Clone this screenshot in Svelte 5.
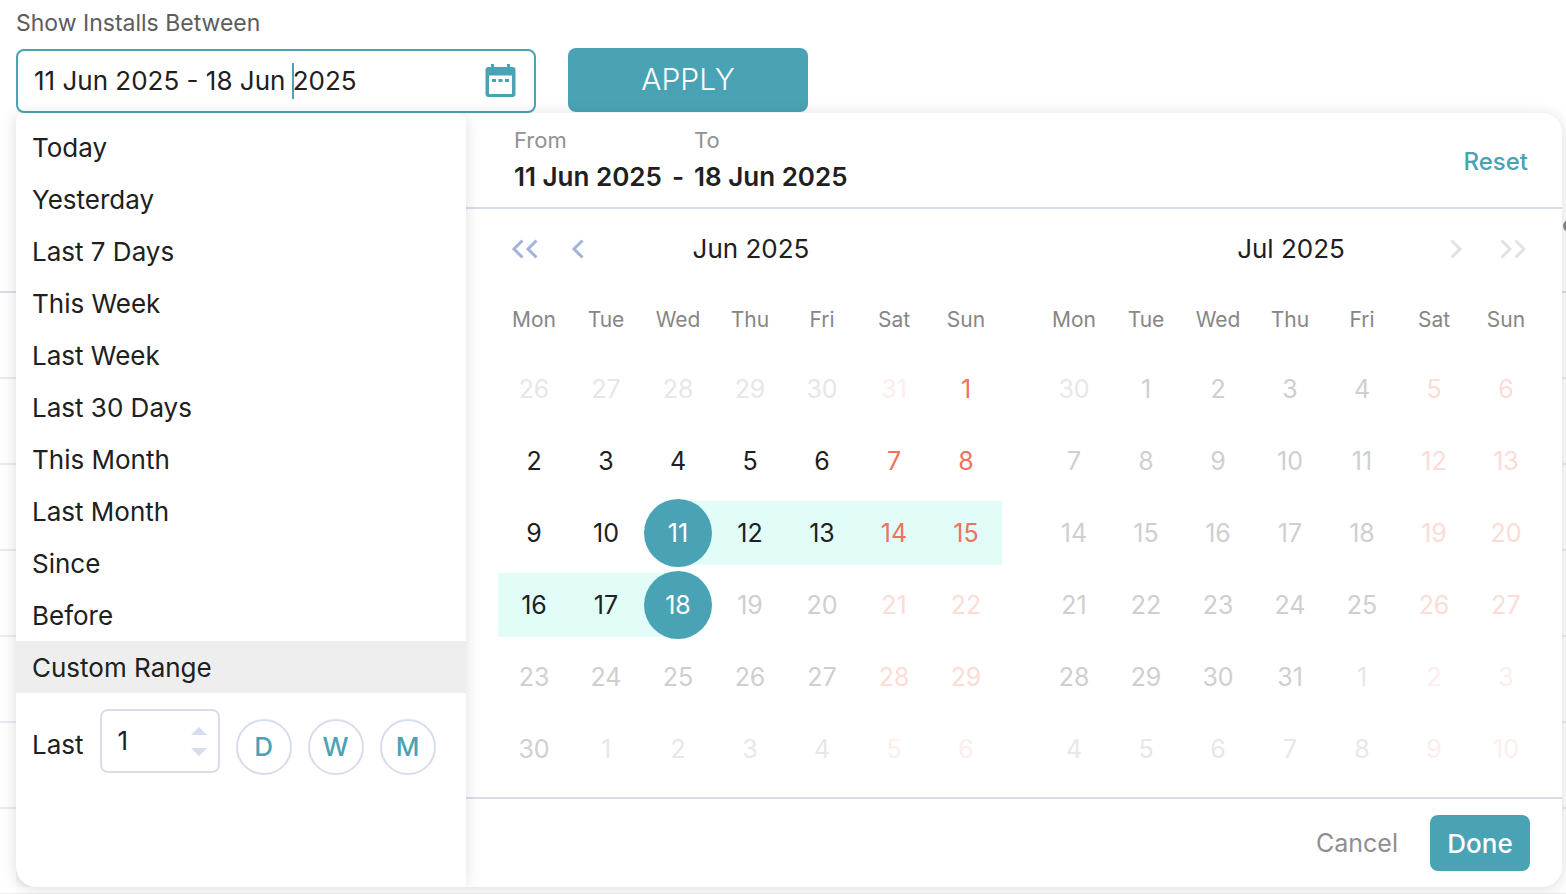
<script>
  const presets = [
    'Today', 'Yesterday', 'Last 7 Days', 'This Week', 'Last Week', 'Last 30 Days',
    'This Month', 'Last Month', 'Since', 'Before', 'Custom Range'
  ];
  const weekdays = ['Mon', 'Tue', 'Wed', 'Thu', 'Fri', 'Sat', 'Sun'];
  const units = [
    { key: 'D', label: 'Days' },
    { key: 'W', label: 'Weeks' },
    { key: 'M', label: 'Months' }
  ];
  const start = new Date(2025, 5, 11).getTime();
  const end = new Date(2025, 5, 18).getTime();

  let selected = $state('Custom Range');
  let range = $state('11 Jun 2025 - 18 Jun 2025');
  let count = $state(1);

  function buildMonth(name, month, firstDay) {
    const weeks = [];
    for (let w = 0; w < 6; w++) {
      const week = [];
      for (let d = 0; d < 7; d++) {
        const date = new Date(2025, firstDay[0], firstDay[1] + w * 7 + d);
        const time = date.getTime();
        const outside = date.getMonth() !== month;
        week.push({
          n: date.getDate(),
          outside,
          weekend: d > 4,
          disabled: outside || time > end,
          start: !outside && time === start,
          end: !outside && time === end,
          between: !outside && time > start && time < end
        });
      }
      weeks.push(week);
    }
    return { name, weeks };
  }

  const months = [
    buildMonth('Jun 2025', 5, [4, 26]),
    buildMonth('Jul 2025', 6, [5, 30])
  ];
</script>

<main>
  <form class="filter" onsubmit={(e) => e.preventDefault()}>
    <label for="range">Show Installs Between</label>
    <div class="controls">
      <div class="field">
        <input id="range" type="text" bind:value={range} />
        <span class="caret"></span>
        <svg width="31" height="34" viewBox="0 0 31 34" aria-hidden="true">
          <path fill="#4aa3b5" fill-rule="evenodd" d="M6 0h3v3h13V0h3v3h2.500a3 3 0 0 1 3 3v24a3 3 0 0 1-3 3h-24a3 3 0 0 1-3-3V6a3 3 0 0 1 3-3H6zM4 11.500V30h23V11.500z" />
          <path fill="#4aa3b5" d="M7 15h4v3H7zM13.500 15h4v3h-4zM20 15h4v3h-4z" />
        </svg>
      </div>
      <button class="apply" type="submit">APPLY</button>
    </div>
  </form>

  <div class="backdrop" aria-hidden="true">
    <div class="head"><span class="dot"></span></div>
    {#each Array(7) as _}<div class="line"></div>{/each}
  </div>

  <section class="picker">
    <aside>
      <ul>
        {#each presets as p}
          <li><button type="button" class:active={p === selected} onclick={() => (selected = p)}>{p}</button></li>
        {/each}
      </ul>
      <div class="last">
        <label for="count">Last</label>
        <div class="number">
          <input id="count" type="number" min="1" bind:value={count} />
          <div class="spin">
            <button type="button" aria-label="Increase" onclick={() => count++}>
              <svg width="16" height="8" viewBox="0 0 16 8"><path fill="#d8ddee" d="M8 0l8 8H0z" /></svg>
            </button>
            <button type="button" aria-label="Decrease" onclick={() => count--}>
              <svg width="16" height="8" viewBox="0 0 16 8"><path fill="#d8ddee" d="M0 0h16L8 8z" /></svg>
            </button>
          </div>
        </div>
        {#each units as u}
          <button type="button" class="unit" aria-label={u.label}>{u.key}</button>
        {/each}
      </div>
    </aside>

    <div class="panel">
      <header>
        <div class="edge"><span>From</span><strong>11 Jun 2025</strong></div>
        <strong class="dash">-</strong>
        <div class="edge"><span>To</span><strong>18 Jun 2025</strong></div>
        <button type="button" class="reset">Reset</button>
      </header>

      <div class="months">
        {#each months as m, i}
          <div class="month">
            <div class="nav">
              <div class="arrows">
                {#if i === 0}
                  <button type="button" aria-label="Previous year">
                    <svg width="28" height="20" viewBox="0 0 28 20"><path d="M11.500 1.500L3 10l8.500 8.500M25.500 1.500L17 10l8.500 8.500" /></svg>
                  </button>
                  <button type="button" aria-label="Previous month">
                    <svg width="14" height="20" viewBox="0 0 14 20"><path d="M11.500 1.500L3 10l8.500 8.500" /></svg>
                  </button>
                {/if}
              </div>
              <h2>{m.name}</h2>
              <div class="arrows next">
                {#if i === 1}
                  <button type="button" aria-label="Next month" disabled>
                    <svg width="14" height="20" viewBox="0 0 14 20"><path d="M2.500 1.500L11 10l-8.500 8.500" /></svg>
                  </button>
                  <button type="button" aria-label="Next year" disabled>
                    <svg width="28" height="20" viewBox="0 0 28 20"><path d="M2.500 1.500L11 10l-8.500 8.500M16.500 1.500L25 10l-8.500 8.500" /></svg>
                  </button>
                {/if}
              </div>
            </div>
            <table>
              <thead>
                <tr>{#each weekdays as d}<th scope="col">{d}</th>{/each}</tr>
              </thead>
              <tbody>
                {#each m.weeks as week}
                  <tr>
                    {#each week as d}
                      <td>
                        <div class="cell" class:between={d.between} class:start={d.start} class:end={d.end}>
                          <button
                            type="button"
                            disabled={d.disabled}
                            class:weekend={d.weekend}
                            class:outside={d.outside}
                            class:picked={d.start || d.end}>{d.n}</button>
                        </div>
                      </td>
                    {/each}
                  </tr>
                {/each}
              </tbody>
            </table>
          </div>
        {/each}
      </div>

      <footer>
        <button type="button" class="cancel">Cancel</button>
        <button type="button" class="done">Done</button>
      </footer>
    </div>
  </section>
</main>

<style>
  :global(body) {
    background: #fff;
  }
  main {
    position: relative;
    overflow: hidden;
    font-family: Inter, 'Liberation Sans', sans-serif;
    font-size: 26px;
    line-height: 32px;
    color: #202020;
  }
  * {
    box-sizing: border-box;
  }
  button,
  input {
    font: inherit;
    color: inherit;
    border: 0;
    padding: 0;
    margin: 0;
    background: none;
  }
  button {
    cursor: pointer;
  }
  svg {
    display: block;
  }

  .filter {
    padding: 8px 16px 0;
  }
  .filter > label {
    display: block;
    height: 40px;
    font-size: 23px;
    line-height: 30px;
    color: #5c5c5c;
  }
  .controls {
    display: flex;
    align-items: flex-start;
    gap: 32px;
  }
  .field {
    position: relative;
    display: flex;
    align-items: center;
    width: 520px;
    height: 64px;
    margin-top: 1px;
    padding: 0 18px 0 16px;
    border: 2px solid #4aa3b5;
    border-radius: 8px;
  }
  .field input {
    flex: 1;
    min-width: 0;
    outline: none;
  }
  .caret {
    position: absolute;
    left: 274px;
    top: 12px;
    width: 2px;
    height: 36px;
    background: #4aa3b5;
  }
  .apply {
    width: 240px;
    height: 64px;
    padding-bottom: 2px;
    border-radius: 8px;
    background: #4aa3b5;
    color: #fff;
    font-size: 30px;
    font-weight: 300;
  }

  .backdrop .head {
    display: flex;
    justify-content: flex-end;
    height: 180px;
    padding-top: 107px;
    border-bottom: 2px solid #d8ddee;
  }
  .dot {
    width: 12px;
    height: 12px;
    margin-right: -9px;
    border-radius: 50%;
    background: #8a8a8a;
  }
  .line {
    height: 86px;
    border-bottom: 2px solid #e9ebf1;
  }

  .picker {
    position: absolute;
    top: 113px;
    left: 16px;
    right: 4px;
    display: flex;
    border-radius: 0 20px 20px 20px;
    background: #fff;
    box-shadow: 0 2px 16px rgba(0, 0, 0, 0.14);
  }
  aside {
    flex: none;
    width: 450px;
    padding-top: 8px;
    border-radius: 8px 8px 0 20px;
    box-shadow: 0 0 16px rgba(0, 0, 0, 0.12);
    clip-path: inset(0 -20px 0 0);
  }
  ul {
    list-style: none;
    margin: 0;
    padding: 0;
  }
  li button {
    display: block;
    width: 100%;
    height: 52px;
    padding: 2px 16px 0;
    text-align: left;
  }
  li .active {
    background: #eee;
  }
  .last {
    display: flex;
    align-items: flex-start;
    gap: 16px;
    padding: 16px;
  }
  .last > label {
    padding-top: 20px;
  }
  .number {
    display: flex;
    align-items: center;
    width: 120px;
    height: 64px;
    padding: 0 11px 0 16px;
    border: 2px solid #d8ddee;
    border-radius: 8px;
  }
  .number input {
    flex: 1;
    min-width: 0;
    outline: none;
    appearance: textfield;
    -moz-appearance: textfield;
  }
  .number input::-webkit-inner-spin-button {
    display: none;
  }
  .spin {
    display: grid;
    gap: 13px;
  }
  .unit {
    width: 56px;
    height: 56px;
    margin-top: 10px;
    border: 2px solid #d8ddee;
    border-radius: 50%;
    color: #4aa3b5;
    font-weight: 500;
  }

  .panel {
    flex: 1;
    min-width: 0;
  }
  header {
    display: flex;
    align-items: flex-end;
    height: 96px;
    padding: 0 34px 14px 48px;
    border-bottom: 2px solid #d8ddee;
  }
  .edge {
    display: grid;
    gap: 5px;
  }
  .edge span {
    font-size: 22px;
    color: #929292;
  }
  strong {
    font-weight: 600;
  }
  .dash {
    padding: 0 10px;
  }
  .reset {
    margin-left: auto;
    padding-bottom: 15px;
    font-size: 24px;
    font-weight: 500;
    color: #4aa3b5;
  }
  .months {
    display: grid;
    grid-template-columns: 1fr 1fr;
    gap: 36px;
    padding: 4px 20px 12px 32px;
  }
  .nav {
    display: grid;
    grid-template-columns: 1fr auto 1fr;
    align-items: center;
    height: 72px;
    padding: 0 15px 0 13px;
  }
  .arrows {
    display: flex;
    gap: 32px;
  }
  .next {
    justify-content: flex-end;
    gap: 36px;
  }
  .arrows path {
    fill: none;
    stroke: #a3b3d9;
    stroke-width: 3;
  }
  .next path {
    stroke: #e2e2e2;
  }
  h2 {
    margin: 0;
    padding-left: 4px;
    font-size: 26px;
    font-weight: 400;
  }
  table {
    width: 100%;
    table-layout: fixed;
    border-collapse: collapse;
  }
  th {
    height: 68px;
    padding: 2px 0 0;
    font-size: 21px;
    font-weight: 400;
    color: #868686;
  }
  td {
    height: 72px;
    padding: 0;
  }
  .cell {
    display: flex;
    align-items: center;
    justify-content: center;
    height: 64px;
  }
  .between {
    background: #e2fdf8;
  }
  .start {
    background: linear-gradient(90deg, transparent 50%, #e2fdf8 50%);
  }
  .end {
    background: linear-gradient(90deg, #e2fdf8 50%, transparent 50%);
  }
  .cell button {
    flex: none;
    width: 68px;
    height: 68px;
    border-radius: 50%;
    font-size: 25px;
  }
  .cell .weekend {
    color: #ef725c;
  }
  .cell button:disabled {
    color: #cfcfcf;
  }
  .cell .weekend:disabled {
    color: #fcdcd6;
  }
  .cell .outside:disabled {
    color: #e7e7e7;
  }
  .cell .outside.weekend:disabled {
    color: #fdeeeb;
  }
  .cell .picked {
    background: #4aa3b5;
    color: #fff;
  }
  footer {
    display: flex;
    align-items: center;
    justify-content: flex-end;
    gap: 32px;
    height: 90px;
    padding: 0 32px;
    border-top: 2px solid #d8ddee;
  }
  .cancel {
    font-size: 25px;
    color: #8f8f8f;
  }
  .done {
    width: 100px;
    height: 56px;
    padding-top: 2px;
    border-radius: 8px;
    background: #4aa3b5;
    color: #fff;
    font-weight: 500;
  }
</style>
